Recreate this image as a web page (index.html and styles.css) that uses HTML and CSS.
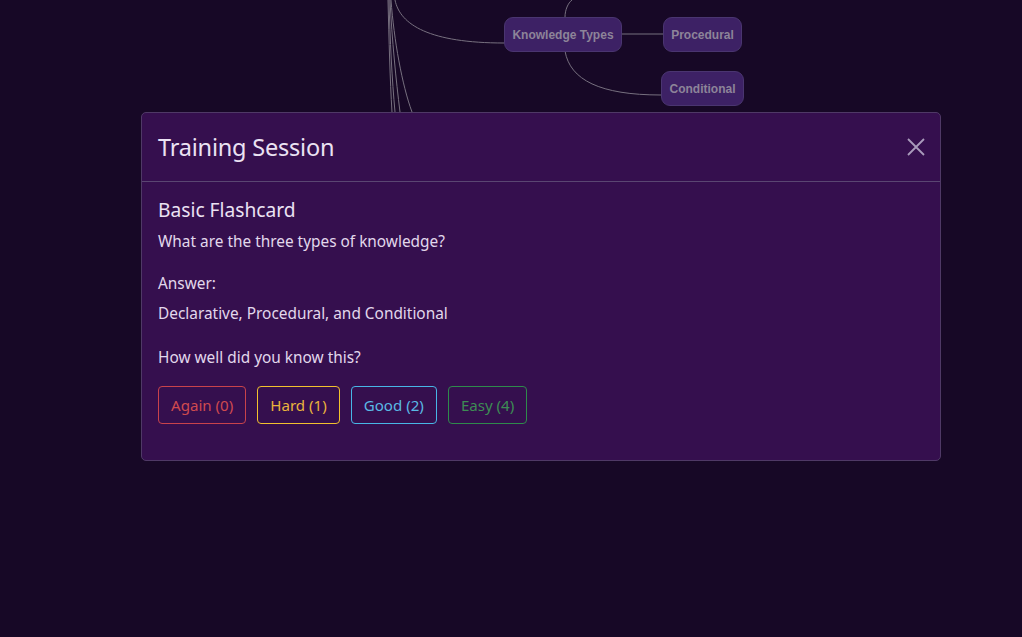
FILE: index.html
```html
<!DOCTYPE html>
<html>
<head>
<meta charset="utf-8">
<link rel="stylesheet" href="styles.css">
</head>
<body>
<div class="canvas">
  <svg class="edges" width="1022" height="637" viewBox="0 0 1022 637">
    <g fill="none" stroke="#77707f" stroke-width="1">
      <path d="M388 0 C389 40 390 80 392 112"/>
      <path d="M389 0 C390 40 392 80 395 112"/>
      <path d="M390 0 C392 40 396 80 400 112"/>
      <path d="M391 0 C394 40 402 85 412 112"/>
      <path d="M395 0 C400 25 430 43 504 43"/>
      <path d="M565 17 C565 10 568 3 572 0"/>
      <path d="M565 51 C570 80 600 95 661 95"/>
      <path d="M621 34 L663 34"/>
    </g>
  </svg>
  <div class="node n1">Knowledge Types</div>
  <div class="node n2">Procedural</div>
  <div class="node n3">Conditional</div>
</div>

<div class="modal">
  <div class="modal-header">
    <h2 class="modal-title">Training Session</h2>
    <button class="close" aria-label="Close">
      <svg width="18" height="18" viewBox="0 0 18 18"><path d="M1 1 L17 17 M17 1 L1 17" stroke="#a99bbb" stroke-width="1.8" fill="none"/></svg>
    </button>
  </div>
  <div class="modal-body">
    <h3 class="card-title">Basic Flashcard</h3>
    <p class="question">What are the three types of knowledge?</p>
    <p class="answer-label">Answer:</p>
    <p class="answer">Declarative, Procedural, and Conditional</p>
    <p class="prompt">How well did you know this?</p>
    <div class="buttons">
      <button class="rate again">Again (0)</button>
      <button class="rate hard">Hard (1)</button>
      <button class="rate good">Good (2)</button>
      <button class="rate easy">Easy (4)</button>
    </div>
  </div>
</div>
</body>
</html>
```
FILE: styles.css
```css
html, body {
  margin: 0;
  padding: 0;
  width: 1022px;
  height: 637px;
  overflow: hidden;
  background: #170826;
  font-family: "Noto Sans", "Open Sans", sans-serif;
}

.canvas {
  position: absolute;
  inset: 0;
}

.edges {
  position: absolute;
  left: 0;
  top: 0;
}

.node {
  position: absolute;
  box-sizing: border-box;
  height: 35px;
  display: flex;
  align-items: center;
  justify-content: center;
  background: #3d2165;
  border: 1px solid #4a3570;
  border-radius: 9px;
  color: #8d8499;
  font-family: "Liberation Sans", Arial, sans-serif;
  font-weight: bold;
  font-size: 12px;
}
.n1 { left: 504px; top: 17px; width: 118px; }
.n2 { left: 663px; top: 17px; width: 79px; }
.n3 { left: 661px; top: 71px; width: 83px; }

.modal {
  position: absolute;
  left: 141px;
  top: 112px;
  width: 800px;
  height: 349px;
  box-sizing: border-box;
  background: #350f4e;
  border: 1px solid #4f3966;
  border-radius: 5px;
  color: #e6dcef;
}

.modal-header {
  height: 69px;
  box-sizing: border-box;
  display: flex;
  align-items: center;
  justify-content: space-between;
  padding: 0 15px 0 16px;
  border-bottom: 1px solid #5a4672;
}

.modal-title {
  margin: 0;
  font-size: 23.5px;
  font-weight: 400;
  color: #ebe2f3;
  letter-spacing: -0.2px;
}

.close {
  background: none;
  border: 0;
  padding: 0;
  width: 18px;
  height: 18px;
  display: flex;
  cursor: pointer;
}

.modal-body {
  padding: 16px 16px 0 16px;
}

.card-title {
  margin: 0 0 9px 0;
  font-size: 19.2px;
  font-weight: 400;
  line-height: 24px;
  color: #ebe2f3;
}

.question, .answer, .prompt, .answer-label {
  margin: 0;
  font-size: 15.4px;
  line-height: 22px;
  color: #e2d8ec;
}

.question { margin-bottom: 20px; }
.answer-label { margin-bottom: 8px; }
.answer { margin-bottom: 22px; }
.prompt { margin-bottom: 17px; }

.buttons {
  display: flex;
  gap: 11px;
}

.rate {
  height: 38px;
  box-sizing: border-box;
  padding: 0 12px;
  background: transparent;
  border: 1px solid;
  border-radius: 4px;
  font-family: inherit;
  font-size: 15.1px;
}
.again { color: #cf4a4e; border-color: #c9434b; }
.hard  { color: #e9b43c; border-color: #f2c12e; }
.good  { color: #5ab9e4; border-color: #48b6e6; }
.easy  { color: #3d8c54; border-color: #2f8a4c; }
```
